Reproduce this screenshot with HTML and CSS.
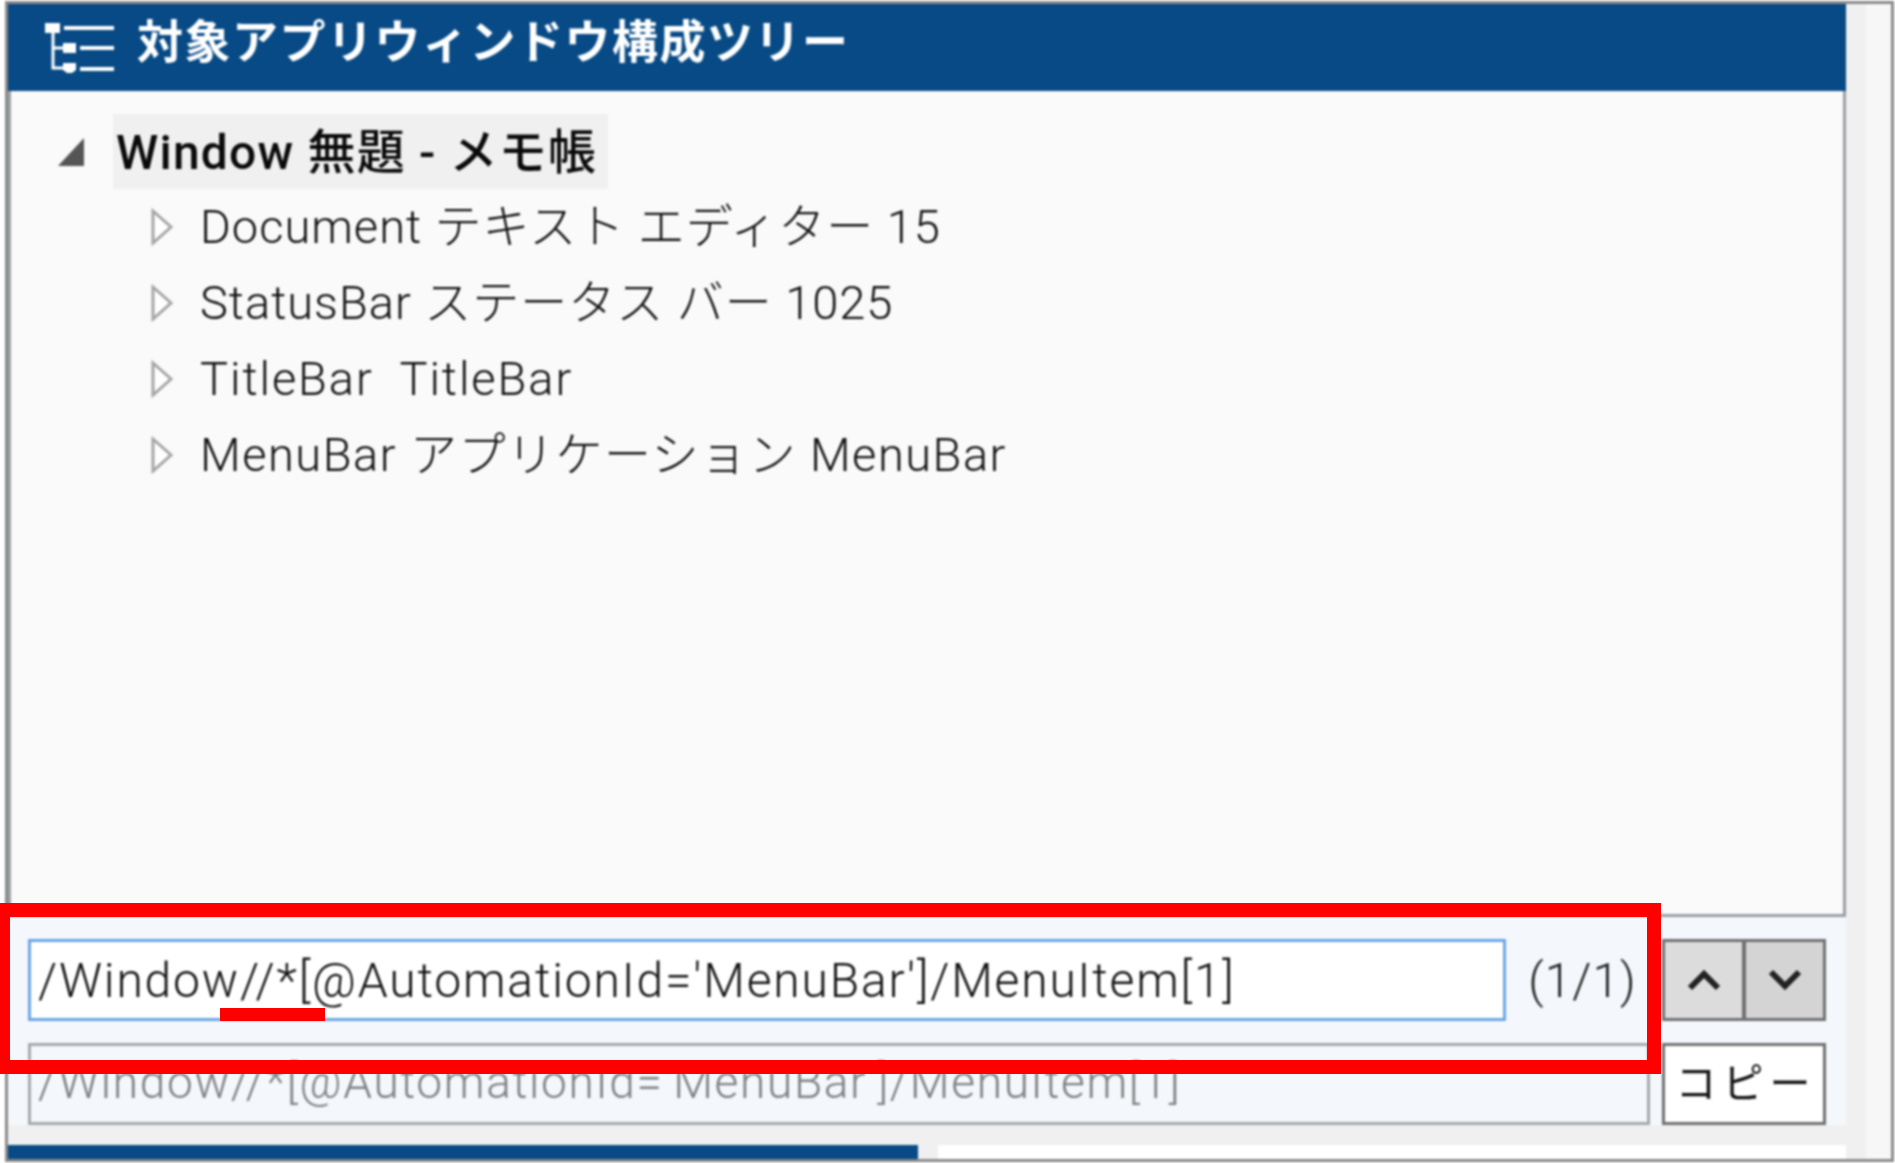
FILE: index.html
```
<!DOCTYPE html>
<html lang="ja">
<head>
<meta charset="utf-8">
<title>対象アプリウィンドウ構成ツリー</title>
<link rel="stylesheet" href="styles.css">
</head>
<body>
<div class="window">
  <div class="main">
    <header class="header">
      <svg class="header-icon" width="70" height="56" viewBox="0 0 70 56">
        <g fill="none" stroke="#fff" stroke-width="3">
          <path d="M9 8V48H20M9 28H20"/>
          <path d="M20 8H71M36 28H71M36 49H71" stroke-width="4"/>
        </g>
        <g fill="#fff">
          <rect x="1" y="3" width="15" height="10"/>
          <rect x="19" y="23" width="13" height="10"/>
          <path d="M19 43H32V50L28 53H23L19 50Z"/>
        </g>
      </svg>
      <h1 class="header-title">対象アプリウィンドウ構成ツリー</h1>
    </header>
    <section class="tree">
      <div class="row row-root">
        <svg class="twist-open" width="28" height="30" viewBox="0 0 28 30"><path d="M27 1V29H1Z" fill="#555"/></svg>
        <span class="label label-root">Window 無題 - メモ帳</span>
      </div>
      <div class="row row-child">
        <svg class="twist" width="24" height="38" viewBox="0 0 24 38"><path d="M3 3L21 19L3 35Z" fill="#fff" stroke="#a6a6a6" stroke-width="3"/></svg>
        <span class="label">Document テキスト エディター 15</span>
      </div>
      <div class="row row-child">
        <svg class="twist" width="24" height="38" viewBox="0 0 24 38"><path d="M3 3L21 19L3 35Z" fill="#fff" stroke="#a6a6a6" stroke-width="3"/></svg>
        <span class="label">StatusBar ステータス バー 1025</span>
      </div>
      <div class="row row-child">
        <svg class="twist" width="24" height="38" viewBox="0 0 24 38"><path d="M3 3L21 19L3 35Z" fill="#fff" stroke="#a6a6a6" stroke-width="3"/></svg>
        <span class="label label-latin">TitleBar&nbsp; TitleBar</span>
      </div>
      <div class="row row-child">
        <svg class="twist" width="24" height="38" viewBox="0 0 24 38"><path d="M3 3L21 19L3 35Z" fill="#fff" stroke="#a6a6a6" stroke-width="3"/></svg>
        <span class="label label-wide">MenuBar アプリケーション MenuBar</span>
      </div>
    </section>
    <section class="search">
      <div class="search-row">
        <div class="field field-active">/Window//*[@AutomationId='MenuBar']/MenuItem[1]</div>
        <div class="count">(1/1)</div>
        <div class="stepper">
          <button class="step step-up" type="button" aria-label="前へ">
            <svg width="36" height="24" viewBox="0 0 36 24"><path d="M4 20L18 6L32 20" fill="none" stroke="#222" stroke-width="6"/></svg>
          </button>
          <button class="step step-down" type="button" aria-label="次へ">
            <svg width="36" height="24" viewBox="0 0 36 24"><path d="M4 4L18 18L32 4" fill="none" stroke="#222" stroke-width="6"/></svg>
          </button>
        </div>
      </div>
      <div class="search-row">
        <div class="field field-result">/Window//*[@AutomationId='MenuBar']/MenuItem[1]</div>
        <button class="copy" type="button">コピー</button>
      </div>
    </section>
    <div class="strip"></div>
    <div class="scrollbar-h">
      <div class="thumb"></div>
      <div class="gutter"></div>
    </div>
  </div>
  <div class="side"></div>
</div>
<div class="mark-box"></div>
<div class="mark-line"></div>
</body>
</html>
```
FILE: styles.css
```
html, body {
  margin: 0;
  padding: 0;
  background: #fff;
  overflow: hidden;
}
body {
  position: relative;
  width: 1895px;
  height: 1163px;
  font-family: Roboto, "Noto Sans CJK JP", sans-serif;
}
.window {
  box-sizing: border-box;
  margin: 1px 1px 0 5px;
  width: 1889px;
  height: 1161px;
  border: 3px solid #8a8a8a;
  display: flex;
  filter: blur(0.8px);
}
.main {
  width: 1838px;
  display: flex;
  flex-direction: column;
}
.side {
  flex: 1;
  background: linear-gradient(to right, #f0f0f0 20px, #f7f7f7 20px);
}
.header {
  height: 87px;
  flex: none;
  background: #074a85;
  display: flex;
  align-items: center;
  gap: 23px;
  padding-left: 36px;
}
.header-icon { flex: none; }
.header-title {
  margin: 0;
  padding-bottom: 12px;
  color: #fff;
  font-size: 46px;
  line-height: 56px;
  font-weight: 700;
  letter-spacing: 1.5px;
  white-space: nowrap;
}
.tree {
  box-sizing: border-box;
  height: 826px;
  flex: none;
  background: #fafafa;
  border: 3px solid #9a9fa6;
  border-top: 0;
  padding-top: 23px;
}
.row {
  height: 76px;
  display: flex;
  align-items: center;
  color: #111;
  font-size: 47px;
  font-weight: 300;
  letter-spacing: 1px;
  white-space: nowrap;
}
.row-root { padding-left: 46px; height: 75px; }
.row-child { padding-left: 139px; }
.twist-open { margin-right: 28px; }
.twist { margin-right: 26px; }
.label { line-height: 60px; }
.label-latin { letter-spacing: 1.9px; }
.label-wide { letter-spacing: 1.5px; }
.label-root {
  color: #0a0a0a;
  font-size: 48px;
  font-weight: 500;
  letter-spacing: 1.2px;
  background: #f0f0f0;
  align-self: stretch;
  display: flex;
  align-items: center;
  box-sizing: border-box;
  padding: 2px 11px 0 3px;
}
.search {
  flex: none;
  height: 208px;
  box-sizing: border-box;
  background: #f4f7fc;
  padding: 22px 20px 0;
  display: flex;
  flex-direction: column;
  gap: 22px;
}
.search-row {
  height: 82px;
  display: flex;
}
.field {
  box-sizing: border-box;
  border: 3px solid;
  display: flex;
  align-items: center;
  padding-left: 7px;
  font-size: 48px;
  font-weight: 300;
  letter-spacing: 1.83px;
  white-space: nowrap;
  overflow: hidden;
}
.field-active {
  width: 1478px;
  background: #fff;
  border-color: #6ba6e6;
  color: #111;
}
.field-result {
  width: 1622px;
  border-color: #a5a8ad;
  color: #808080;
  font-size: 46px;
  letter-spacing: 1.66px;
  padding-bottom: 4px;
  background: #f4f7fc;
}
.count {
  width: 156px;
  display: flex;
  align-items: center;
  justify-content: center;
  box-sizing: border-box;
  padding-right: 3px;
  color: #222;
  font-size: 48px;
  font-weight: 300;
  letter-spacing: 1px;
}
.stepper {
  width: 164px;
  display: flex;
}
.step {
  flex: 1;
  margin: 0;
  padding: 0;
  border: 3px solid #707070;
  display: flex;
  align-items: center;
  justify-content: center;
}
.step-up { background: #dcdcdc; border-right-width: 2px; }
.step-down { background: #d4d4d4; border-left-width: 2px; }
.copy {
  margin: 0 0 0 12px;
  width: 164px;
  box-sizing: border-box;
  border: 3px solid #707070;
  background: #fff;
  color: #111;
  font-family: inherit;
  font-size: 41px;
  font-weight: 400;
  padding: 0 0 9px 4px;
  letter-spacing: 6px;
  white-space: nowrap;
}
.strip {
  flex: none;
  height: 20px;
  background: #f0f0f0;
}
.scrollbar-h {
  flex: 1;
  display: flex;
  background: #fff;
}
.thumb { width: 910px; background: #074a85; }
.gutter { width: 20px; background: #f0f0f0; }
.mark-box {
  position: absolute;
  left: 0;
  top: 903px;
  width: 1661px;
  height: 171px;
  box-sizing: border-box;
  border: 14px solid #f00;
  border-left-width: 10px;
}
.mark-line {
  position: absolute;
  left: 220px;
  top: 1008px;
  width: 105px;
  height: 13px;
  background: #f00;
}
```
